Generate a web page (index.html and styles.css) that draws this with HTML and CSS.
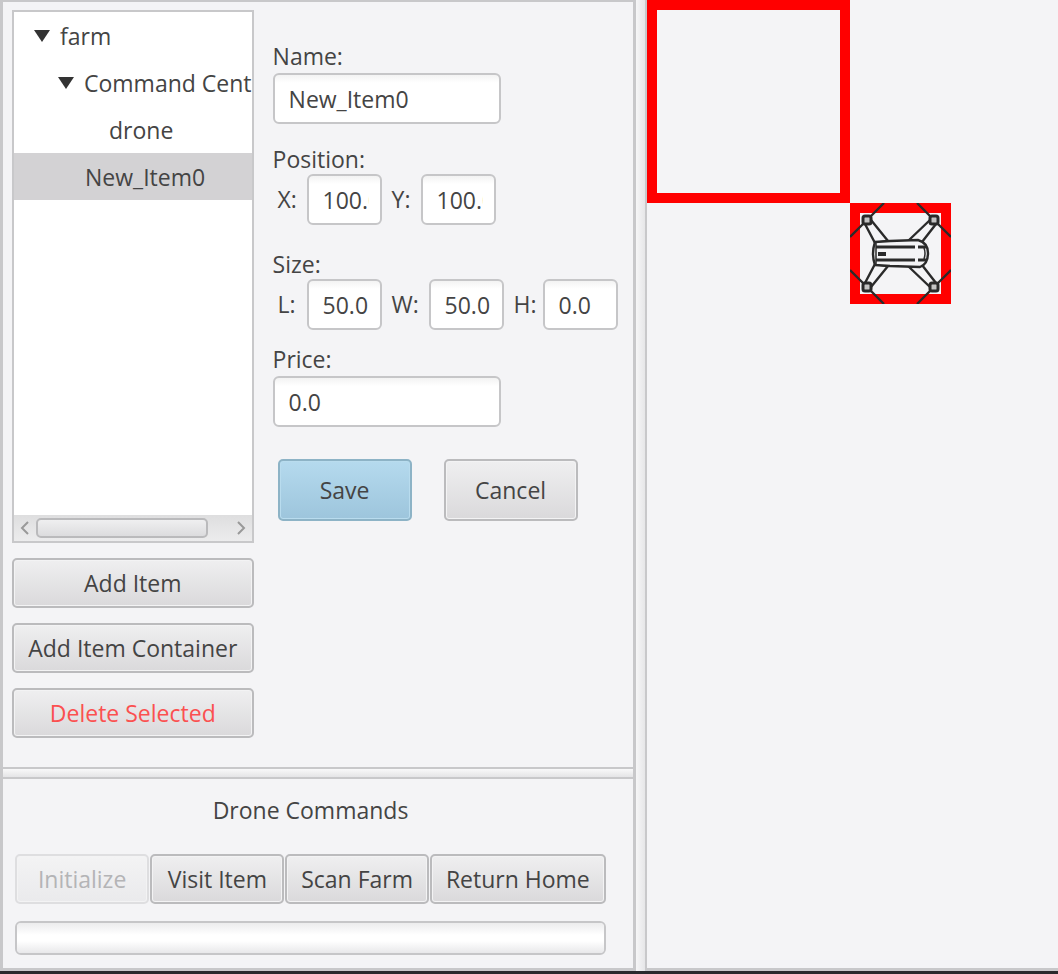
FILE: index.html
```
<!DOCTYPE html>
<html lang="en">
	<head>
		<meta charset="utf-8">
		<title>Farm Dashboard</title>
		<link rel="stylesheet" href="styles.css">
	</head>

	<body>

		<main>

			<div class="side">

				<!-- 
					Item tree, with the buttons that change it, and the item's details
				-->

				<section class="items">

					<div class="treeColumn">
						<div class="treeBox">
							<ul class="tree">
								<li class="level1"><span class="arrow"></span>farm</li>
								<li class="level2"><span class="arrow"></span>Command Cent</li>
								<li class="level3">drone</li>
								<li class="level2 leaf selected">New_Item0</li>
							</ul>
							<div class="scrollbar">
								<button type="button" aria-label="Scroll left">
									<svg width="10" height="16" viewBox="0 0 10 16"><path d="M8 2 L2 8 L8 14"/></svg>
								</button>
								<div class="track"><div class="thumb"></div></div>
								<button type="button" aria-label="Scroll right">
									<svg width="10" height="16" viewBox="0 0 10 16"><path d="M2 2 L8 8 L2 14"/></svg>
								</button>
							</div>
						</div>

						<button type="button" class="btn">Add Item</button>
						<button type="button" class="btn">Add Item Container</button>
						<button type="button" class="btn delete">Delete Selected</button>
					</div>

					<form>
						<div class="field">
							<label for="itemName">Name:</label>
							<input id="itemName" class="wide" type="text" value="New_Item0">
						</div>

						<div class="field position">
							<div class="heading">Position:</div>
							<div class="numbers">
								<label for="posX">X:</label>
								<input id="posX" type="text" value="100.0">
								<label for="posY">Y:</label>
								<input id="posY" type="text" value="100.0">
							</div>
						</div>

						<div class="field size">
							<div class="heading">Size:</div>
							<div class="numbers">
								<label for="sizeL">L:</label>
								<input id="sizeL" type="text" value="50.0">
								<label for="sizeW" class="wideLabel">W:</label>
								<input id="sizeW" type="text" value="50.0">
								<label for="sizeH">H:</label>
								<input id="sizeH" type="text" value="0.0">
							</div>
						</div>

						<div class="field">
							<label for="price">Price:</label>
							<input id="price" class="wide" type="text" value="0.0">
						</div>

						<div class="actions">
							<button type="button" class="btn save">Save</button>
							<button type="button" class="btn">Cancel</button>
						</div>
					</form>

				</section>

				<div class="splitRow"></div>

				<!-- 
					Drone controls
				-->

				<section class="commands">
					<h1>Drone Commands</h1>
					<div class="commandRow">
						<button type="button" class="btn" disabled>Initialize</button>
						<button type="button" class="btn">Visit Item</button>
						<button type="button" class="btn">Scan Farm</button>
						<button type="button" class="btn">Return Home</button>
					</div>
					<progress value="0" max="100" aria-label="Drone progress"></progress>
				</section>

			</div>

			<div class="splitColumn"></div>

			<!-- 
				Map of the farm
			-->

			<div class="farm">
				<div class="container"></div>
				<div class="drone">
					<svg viewBox="0 0 101 101">
						<rect x="5" y="5" width="91" height="91" fill="none" stroke="#ff0000" stroke-width="10"/>
						<g fill="none" stroke="#2a2a2a" stroke-width="2.4" stroke-linejoin="round">
							<!-- propellers -->
							<path d="M0 34 L13 21 M21 13 L34 0 M67 0 L80 13 M88 21 L101 34 M0 67 L13 80 M21 88 L34 101 M67 101 L80 88 M88 80 L101 67"/>
							<!-- arms -->
							<g fill="#f4f4f6">
								<path d="M15 21 L25 40 L38 38 L21 17 Z"/>
								<path d="M86 21 L72 39 L58 38 L80 17 Z"/>
								<path d="M15 80 L25 61 L38 63 L21 84 Z"/>
								<path d="M86 80 L72 62 L58 63 L80 84 Z"/>
								<!-- body -->
								<path d="M25 39 L40 38 L68 37 Q78 40 78 50 Q78 61 70 64 L40 63 L25 62 Q21 51 25 39 Z"/>
							</g>
							<path d="M26 44 H65 M68 44 H76 M26 57 H65 M68 57 H76" stroke-width="3"/>
							<path d="M26 40 V61 M74 45 Q76 50 74 56" stroke-width="1.5"/>
						</g>
						<rect x="28" y="49" width="8" height="4" fill="#2a2a2a"/>
						<g fill="#c4c4c4" stroke="#2a2a2a" stroke-width="3">
							<rect x="13" y="13" width="8" height="8" rx="2"/>
							<rect x="80" y="13" width="8" height="8" rx="2"/>
							<rect x="13" y="80" width="8" height="8" rx="2"/>
							<rect x="80" y="80" width="8" height="8" rx="2"/>
						</g>
					</svg>
				</div>
			</div>

		</main>

	</body>
</html>
```
FILE: styles.css
```
* {
	box-sizing: border-box;
}

body {
	margin: 0;
	font-family: "Open Sans", "Noto Sans", sans-serif;
	font-size: 23px;
	line-height: 30px;
	color: #444;
	background-color: #f4f4f6;
}

/*
	whole window, with the dark edge of the desktop under it
*/

main {
	display: flex;
	min-height: 100vh;
	border-bottom: 3px solid #2a2a2c;
}

.side {
	display: flex;
	flex-direction: column;
	flex: 0 0 60%;
	min-width: 636px;
	border: 3px solid #c8c8ca;
	border-top-width: 2px;
}

/*
	dividers between the panes
*/

.splitColumn {
	flex: 0 0 11px;
	background: linear-gradient(to right, #f6f6f7, #e6e6e8);
	border-right: 2px solid #c8c8ca;
}

.splitRow {
	height: 12px;
	background: linear-gradient(#f8f8f9, #e4e4e6);
	border-top: 2px solid #c8c8ca;
	border-bottom: 2px solid #c8c8ca;
}

/*
	item tree
*/

.items {
	display: flex;
	flex: 1;
	gap: 19px;
	padding: 8px 9px 29px;
}

.treeColumn {
	display: flex;
	flex-direction: column;
	gap: 15px;
	width: 243px;
}

.treeBox {
	display: flex;
	flex-direction: column;
	flex: 1;
	background-color: white;
	border: 2px solid #c8c8ca;
	overflow: hidden;
}

.tree {
	flex: 1;
	margin: 0;
	padding: 0;
	list-style: none;
}

.tree li {
	display: flex;
	align-items: center;
	height: 47px;
	white-space: nowrap;
}

.level1 {
	padding-left: 20px;
}

.level2 {
	padding-left: 44px;
}

.level3 {
	padding-left: 95px;
}

.leaf {
	padding-left: 71px;
}

.selected {
	background-color: #d3d2d4;
}

.arrow {
	margin-right: 10px;
	border: 8px solid transparent;
	border-top: 12px solid #333;
	border-bottom: 0;
}

.scrollbar {
	display: flex;
	align-items: center;
	height: 26px;
	background: linear-gradient(#dededf, #ececed);
}

.scrollbar button {
	display: flex;
	justify-content: center;
	width: 22px;
	padding: 0;
	border: 0;
	background: none;
}

.scrollbar path {
	fill: none;
	stroke: #999;
	stroke-width: 2;
}

.track {
	flex: 1;
}

.thumb {
	width: 89%;
	height: 20px;
	border: 2px solid #bababc;
	border-radius: 5px;
	background: linear-gradient(#efeff0, #dcdcde);
}

/*
	buttons
*/

.btn {
	height: 50px;
	padding: 0;
	font: inherit;
	color: #444;
	white-space: nowrap;
	border: 2px solid #bbbbbd;
	border-radius: 5px;
	background: linear-gradient(#efeff0, #dad9db);
	box-shadow: inset 0 0 0 1px #f3f3f4;
}

.delete {
	color: #fb5050;
}

.save {
	border-color: #8db3c6;
	background: linear-gradient(#b5daee, #9dc5dc);
	box-shadow: inset 0 0 0 1px #b9dcee;
}

.btn:disabled {
	color: #b4b4b6;
	opacity: 1;
	border-color: #dedee0;
	background: linear-gradient(#f3f3f4, #eaeaec);
}

/*
	item details
*/

form {
	padding-top: 31px;
}

.field {
	margin-bottom: 20px;
}

.field.position {
	margin-bottom: 24px;
}

.field.size {
	margin-bottom: 14px;
}

.field label {
	display: block;
	height: 32px;
}

.heading {
	height: 30px;
}

.numbers {
	display: flex;
	align-items: center;
	padding-left: 5px;
}

.numbers label {
	width: 29px;
}

.numbers .wideLabel {
	width: 37px;
}

input {
	width: 75px;
	height: 51px;
	margin-right: 10px;
	padding: 0 11px 0 14px;
	font: inherit;
	color: #444;
	border: 2px solid #c6c6c8;
	border-radius: 6px;
	background: linear-gradient(#f3f3f3, white 8px);
}

input.wide {
	display: block;
	width: 228px;
}

.actions {
	display: flex;
	gap: 32px;
	padding: 12px 5px;
}

.actions .btn {
	width: 134px;
	height: 62px;
}

/*
	drone commands
*/

.commands {
	padding: 16px 27px 13px 12px;
}

h1 {
	margin: 0 0 29px;
	font-size: 23px;
	font-weight: normal;
	text-align: center;
}

.commandRow {
	display: grid;
	grid-template-columns: 134fr 134fr 143fr 176fr;
	gap: 1px;
	margin-bottom: 17px;
}

progress {
	display: block;
	width: 100%;
	height: 34px;
	appearance: none;
	border: 2px solid #c6c6c8;
	border-radius: 6px;
	overflow: hidden;
}

progress::-webkit-progress-bar {
	background: linear-gradient(#ececed, white 40%, white 60%, #e8e8ea);
}

/*
	map
*/

.farm {
	position: relative;
	flex: 1;
	overflow: hidden;
	border-bottom: 3px solid #c8c8ca;
}

.container {
	position: absolute;
	top: 0;
	left: 0;
	width: 203px;
	height: 203px;
	border: 10px solid red;
}

.drone {
	position: absolute;
	top: 203px;
	left: 203px;
	width: 101px;
	height: 101px;
}

.drone svg {
	display: block;
}
```
